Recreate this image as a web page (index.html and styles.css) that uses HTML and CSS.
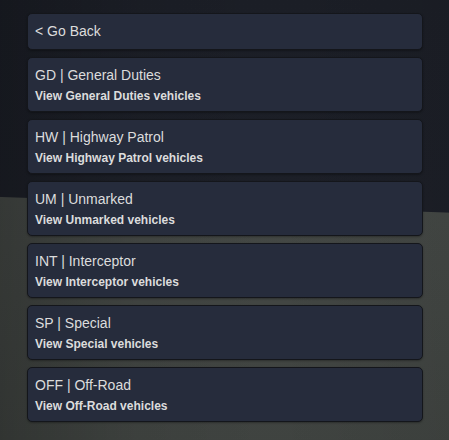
FILE: index.html
```html
<!DOCTYPE html>
<html>
<head>
<meta charset="utf-8">
<link rel="stylesheet" href="styles.css">
</head>
<body>
<div class="menu">
  <div class="card back"><div class="title">&lt; Go Back</div></div>
  <div class="card"><div class="title">GD | General Duties</div><div class="desc">View General Duties vehicles</div></div>
  <div class="card"><div class="title">HW | Highway Patrol</div><div class="desc">View Highway Patrol vehicles</div></div>
  <div class="card"><div class="title">UM | Unmarked</div><div class="desc">View Unmarked vehicles</div></div>
  <div class="card"><div class="title">INT | Interceptor</div><div class="desc">View Interceptor vehicles</div></div>
  <div class="card"><div class="title">SP | Special</div><div class="desc">View Special vehicles</div></div>
  <div class="card"><div class="title">OFF | Off-Road</div><div class="desc">View Off-Road vehicles</div></div>
</div>
</body>
</html>
```
FILE: styles.css
```css
html, body {
  margin: 0;
  height: 100%;
}
body {
  font-family: "Liberation Sans", Arial, sans-serif;
  background:
    linear-gradient(90deg, rgba(0,0,0,0.22) 0, rgba(0,0,0,0.05) 30%, rgba(0,0,0,0) 60%, rgba(0,0,0,0.06) 100%),
    linear-gradient(182deg, #1b1e26 0, #1c1f27 212px, #444845 213px, #3f4340 100%);
  overflow: hidden;
}
.menu {
  display: flex;
  flex-direction: column;
  gap: 7px;
  padding: 13px 26px 0 27px;
}
.card {
  background: #262c3c;
  border: 1px solid #14161b;
  border-radius: 5px;
  padding: 9px 7px 8px;
  color: #dcdcdc;
  box-shadow: 0 1px 2px rgba(0,0,0,0.3);
}
.card.back {
  padding: 9px 7px 10px;
}
.title {
  font-size: 14px;
  line-height: 16px;
}
.desc {
  font-size: 12px;
  font-weight: bold;
  line-height: 14px;
  margin-top: 6px;
}
```
